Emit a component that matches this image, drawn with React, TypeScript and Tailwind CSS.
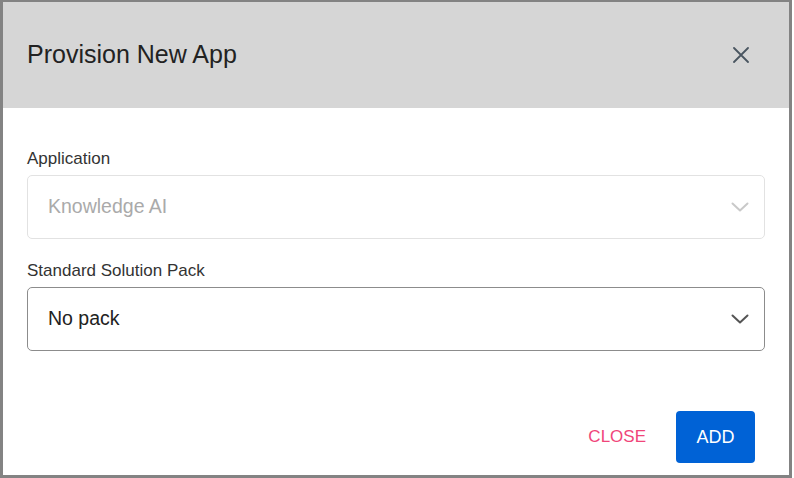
import React from 'react'

function Chevron({ color }: { color: string }) {
  return (
    <svg width="18" height="10" viewBox="0 0 18 10" fill="none" className="shrink-0">
      <polyline points="1.5,1.5 9,8.5 16.5,1.5" stroke={color} strokeWidth="2" strokeLinecap="round" strokeLinejoin="round" />
    </svg>
  )
}

function SelectBox({ value, disabled }: { value: string; disabled?: boolean }) {
  return (
    <div
      className={
        disabled
          ? 'flex h-[64px] items-center justify-between rounded-[5px] border border-[#e2e2e2] pl-[20px] pr-[15px] text-[19.5px] text-[#aaaaaa]'
          : 'flex h-[64px] items-center justify-between rounded-[5px] border border-[#8c8c8c] pl-[20px] pr-[15px] text-[19.5px] text-[#222222]'
      }
    >
      <span>{value}</span>
      <Chevron color={disabled ? '#c9c9c9' : '#555555'} />
    </div>
  )
}

export default function App() {
  return (
    <div className="h-[478px] w-[794px] bg-white font-['Liberation_Sans',Arial,sans-serif]">
      <div className="flex h-[478px] w-[792px] flex-col border-[3px] border-t-2 border-[#838383] bg-white">
        {/* header */}
        <div className="flex h-[106px] shrink-0 items-center justify-between bg-[#d6d6d6] pl-[24px] pr-[38px]">
          <h2 className="text-[25px] text-[#222222]">Provision New App</h2>
          <button className="flex h-[20px] w-[20px] items-center justify-center">
            <svg width="16" height="16" viewBox="0 0 16 16" fill="none">
              <path d="M1 1 L15 15 M15 1 L1 15" stroke="#4a5661" strokeWidth="1.8" strokeLinecap="round" />
            </svg>
          </button>
        </div>

        {/* body */}
        <div className="flex flex-1 flex-col px-[24px] pt-[41px]">
          <label className="mb-[6px] text-[17px] leading-[20px] text-[#333333]">Application</label>
          <SelectBox value="Knowledge AI" disabled />
          <label className="mb-[6px] mt-[22px] text-[17px] leading-[20px] text-[#333333]">Standard Solution Pack</label>
          <SelectBox value="No pack" />
        </div>

        {/* footer */}
        <div className="flex items-center justify-end gap-[18px] pb-[12px] pr-[34px]">
          <button className="px-[12px] text-[17px] text-[#f0457a]">CLOSE</button>
          <button className="flex h-[52px] w-[79px] items-center justify-center rounded-[4px] bg-[#0062d6] text-[18px] text-white">
            ADD
          </button>
        </div>
      </div>
    </div>
  )
}
